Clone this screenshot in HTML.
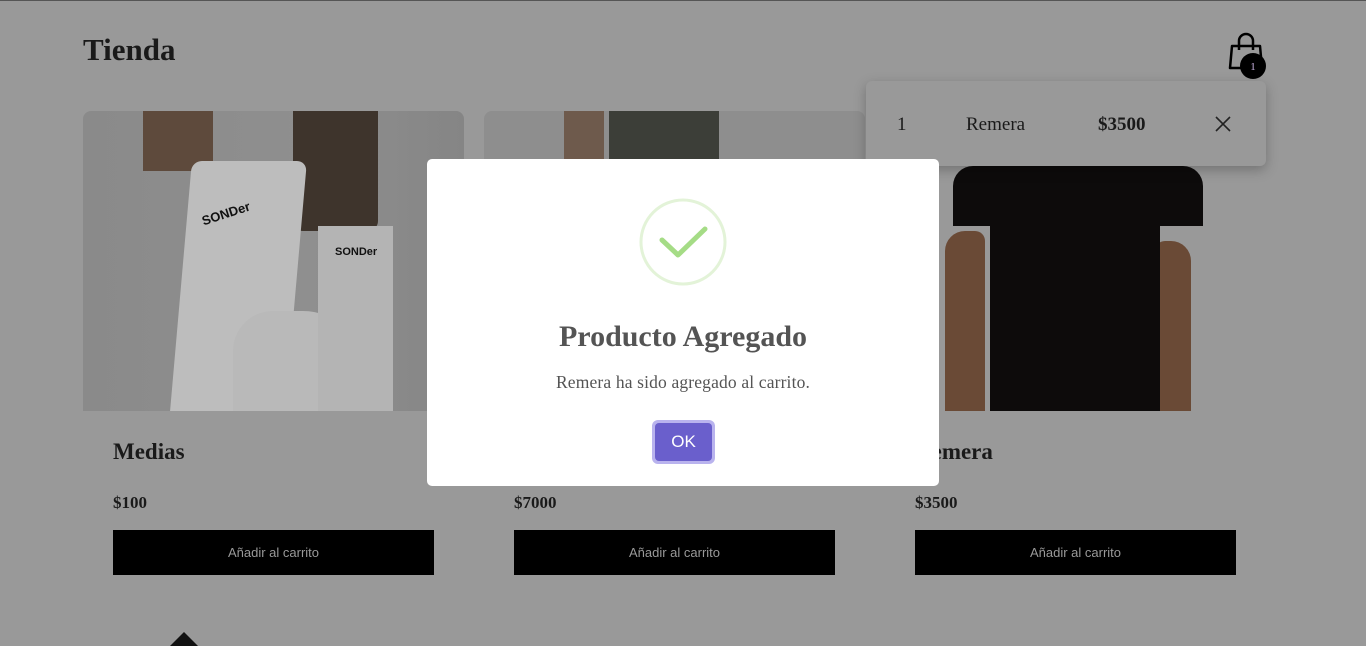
<!DOCTYPE html>
<html><head><meta charset="utf-8"><style>
*{margin:0;padding:0;box-sizing:border-box}
body{width:1366px;height:644px;overflow:hidden;background:#999;font-family:"Liberation Serif",serif;position:relative}
.topline{position:absolute;left:0;top:0;width:1366px;height:1px;background:#555}
h1{position:absolute;left:83px;top:32px;font-size:31px;font-weight:bold;color:#1a1a1a}
.card{position:absolute;top:111px;width:381px}
.img{position:absolute;left:0;top:0;width:381px;height:300px;border-radius:8px 8px 0 0;overflow:hidden}
.name{position:absolute;left:30px;top:328px;font-size:23px;font-weight:bold;color:#1a1a1a}
.price{position:absolute;left:30px;top:382px;font-size:17px;font-weight:bold;color:#1a1a1a}
.btn{position:absolute;left:30px;top:419px;width:321px;height:45px;background:#000;color:#999;font-family:"Liberation Sans",sans-serif;font-size:13px;text-align:center;line-height:45px}
.ab{position:absolute}
.cart{position:absolute;left:866px;top:81px;width:400px;height:85px;background:#999;border-radius:6px;box-shadow:0 4px 12px rgba(0,0,0,.25);font-size:19px;color:#1a1a1a}
.modal{position:absolute;left:427px;top:159px;width:512px;height:327px;background:#fff;border-radius:5px;text-align:center}
</style></head><body>
<div class="topline"></div>
<h1>Tienda</h1>
<svg class="ab" style="left:1226px;top:32px" width="44" height="48" viewBox="0 0 44 48">
<path d="M6 14 H34 L36 36 H4 Z" fill="none" stroke="#000" stroke-width="2.5" stroke-linejoin="round"/>
<path d="M13 18 V9 a7 7 0 0 1 14 0 V18" fill="none" stroke="#000" stroke-width="2.5"/>
<circle cx="27" cy="34" r="13" fill="#000"/>
<text x="27" y="38" font-size="11" fill="#c8b0e0" text-anchor="middle" font-family="Liberation Serif">1</text>
</svg>

<div class="card" style="left:83px">
 <div class="img" style="background:linear-gradient(90deg,#8a8a8a,#8f8f8f 60%,#858585)">
  <div class="ab" style="left:60px;top:0;width:70px;height:60px;background:#5e4a3c"></div>
  <div class="ab" style="left:210px;top:0;width:85px;height:120px;background:#3e342c;border-radius:0 0 10px 10px"></div>
  <div class="ab" style="left:98px;top:50px;width:115px;height:250px;background:#bdbdbd;transform:skewX(-5deg);border-radius:10px 10px 0 0"></div>
  <div class="ab" style="left:150px;top:200px;width:130px;height:100px;background:#b9b9b9;border-radius:40px 60px 0 0"></div>
  <div class="ab" style="left:235px;top:115px;width:75px;height:185px;background:#b4b4b4"></div>
  <div class="ab" style="left:118px;top:95px;font-family:'Liberation Sans';font-size:13px;color:#111;transform:rotate(-18deg);font-weight:bold">SONDer</div>
  <div class="ab" style="left:252px;top:135px;font-family:'Liberation Sans';font-size:11px;color:#111;font-weight:bold">SONDer</div>
 </div>
 <div class="name">Medias</div><div class="price">$100</div><div class="btn">Añadir al carrito</div>
</div>

<div class="card" style="left:484px">
 <div class="img" style="background:#8e8e8e">
  <div class="ab" style="left:80px;top:0;width:40px;height:50px;background:#6e5a4c"></div>
  <div class="ab" style="left:125px;top:0;width:110px;height:60px;background:#3c3e38"></div>
 </div>
 <div class="name">Pantalón</div><div class="price">$7000</div><div class="btn">Añadir al carrito</div>
</div>

<div class="card" style="left:885px">
 <div class="img" style="background:#999">
  <div class="ab" style="left:60px;top:120px;width:40px;height:180px;background:#6a4a36;border-radius:20px 10px 0 0"></div>
  <div class="ab" style="left:270px;top:130px;width:36px;height:170px;background:#6a4a36;border-radius:10px 20px 0 0"></div>
  <div class="ab" style="left:68px;top:55px;width:250px;height:60px;background:#0d0b0b;border-radius:20px 20px 0 0"></div>
  <div class="ab" style="left:105px;top:55px;width:170px;height:245px;background:#0d0b0b"></div>
 </div>
 <div class="name">Remera</div><div class="price">$3500</div><div class="btn">Añadir al carrito</div>
</div>

<div class="ab" style="left:170px;top:632px;width:0;height:0;border-left:14px solid transparent;border-right:14px solid transparent;border-bottom:14px solid #111"></div>

<div class="cart">
 <span class="ab" style="left:31px;top:33px">1</span>
 <span class="ab" style="left:100px;top:33px">Remera</span>
 <span class="ab" style="left:232px;top:33px;font-weight:bold">$3500</span>
 <svg class="ab" style="left:349px;top:35px" width="16" height="16"><path d="M1 1L15 15M15 1L1 15" stroke="#222" stroke-width="1.6"/></svg>
</div>

<div class="modal">
 <svg class="ab" style="left:211px;top:39px" width="90" height="90" viewBox="0 0 90 90">
  <circle cx="45" cy="44" r="42" fill="none" stroke="#e3f3d8" stroke-width="3"/>
  <path d="M24 52 L40 67 L67 41" fill="none" stroke="#a5dc86" stroke-width="5" stroke-linecap="round" stroke-linejoin="round" transform="translate(0,-10)"/>
 </svg>
 <div class="ab" style="left:0;width:512px;top:161px;font-size:30px;font-weight:bold;color:#545454">Producto Agregado</div>
 <div class="ab" style="left:0;width:512px;top:213px;font-size:17.5px;letter-spacing:0.15px;color:#545454">Remera ha sido agregado al carrito.</div>
 <div class="ab" style="left:225px;top:261px;width:63px;height:44px;border-radius:6px;background:#b9b3ee"></div>
 <div class="ab" style="left:228px;top:264px;width:57px;height:38px;border-radius:4px;background:#6a5fcc;color:#fff;font-family:'Liberation Sans',sans-serif;font-size:17px;line-height:38px">OK</div>
</div>
</body></html>
